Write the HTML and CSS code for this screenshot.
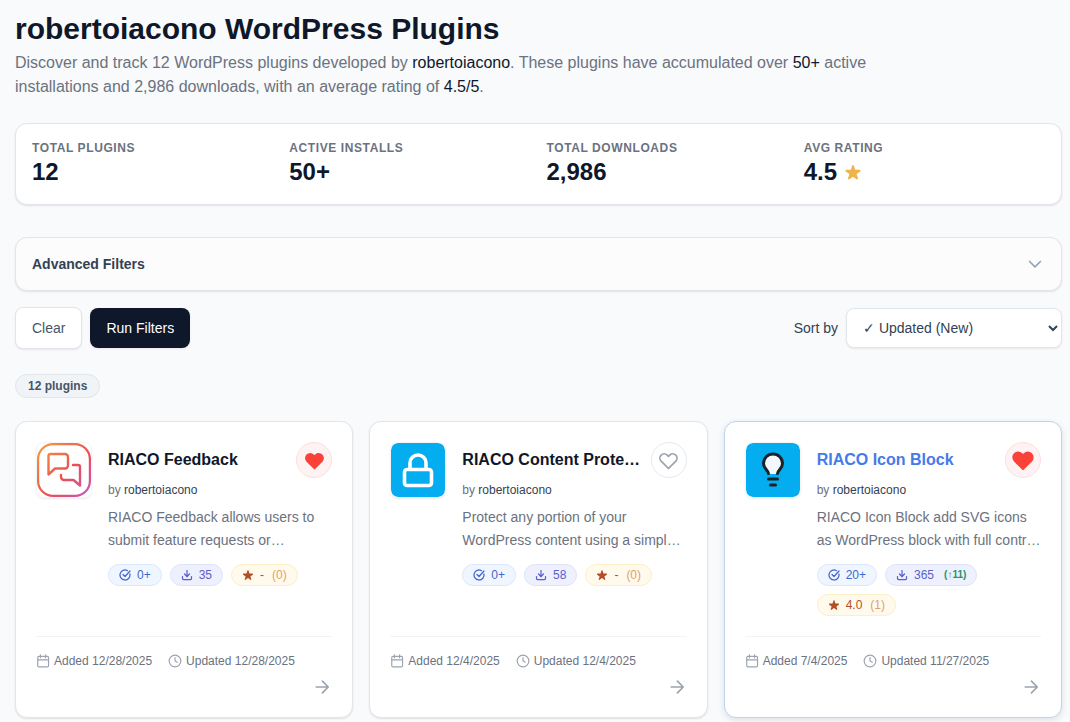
FILE: index.html
```html
<!DOCTYPE html>
<html lang="en">
<head>
    <meta charset="UTF-8">
    <meta name="viewport" content="width=device-width, initial-scale=1.0">
    <title>robertoiacono WordPress Plugins</title>
    <link rel="stylesheet" href="styles.css">
</head>
<body>
    <!-- Shared icons -->
    <svg class="sprite" width="0" height="0">
        <symbol id="check" viewBox="0 0 24 24"><path d="M21.8 10A10 10 0 1 1 17 3.34"/><path d="m8 11 4 4L22 4"/></symbol>
        <symbol id="download" viewBox="0 0 24 24"><path d="M21 15v4a2 2 0 0 1-2 2H5a2 2 0 0 1-2-2v-4"/><path d="m7 10 5 5 5-5"/><path d="M12 15V3"/></symbol>
        <symbol id="star" viewBox="0 0 20 20"><path d="M9.05 2.93c.3-.92 1.6-.92 1.9 0l1.52 4.67h4.91c.97 0 1.37 1.24.59 1.81l-3.98 2.89 1.52 4.67c.3.92-.76 1.69-1.54 1.12L10 15.2l-3.97 2.89c-.78.57-1.84-.2-1.54-1.12l1.52-4.67-3.98-2.89c-.78-.57-.38-1.81.59-1.81h4.91z"/></symbol>
        <symbol id="heart" viewBox="0 0 24 24"><path d="M4.32 6.32a4.5 4.5 0 0 0 0 6.36L12 20.36l7.68-7.68a4.5 4.5 0 0 0-6.36-6.36L12 7.64l-1.32-1.32a4.5 4.5 0 0 0-6.36 0z"/></symbol>
        <symbol id="calendar" viewBox="0 0 24 24"><path d="M7.500 1.500v5M16.500 1.500v5M3 10h18"/><rect x="3" y="4" width="18.500" height="18" rx="2"/></symbol>
        <symbol id="clock" viewBox="0 0 24 24"><circle cx="12" cy="12" r="10"/><path d="M12 6v6l4 2"/></symbol>
        <symbol id="arrow" viewBox="0 0 24 24"><path d="M5 12h14M12.500 5l7 7-7 7"/></symbol>
    </svg>

    <div class="page">
        <header class="header">
            <h1>robertoiacono WordPress Plugins</h1>
            <p>Discover and track 12 WordPress plugins developed by <span>robertoiacono</span>. These plugins have accumulated over <span>50+</span> active installations and 2,986 downloads, with an average rating of <span>4.5/5</span>.</p>
        </header>

        <section class="stats">
            <div><div class="stat-label">Total Plugins</div><div class="stat-value">12</div></div>
            <div><div class="stat-label">Active Installs</div><div class="stat-value">50+</div></div>
            <div><div class="stat-label">Total Downloads</div><div class="stat-value">2,986</div></div>
            <div><div class="stat-label">Avg Rating</div><div class="stat-value">4.5 <svg class="stat-star"><use href="#star"/></svg></div></div>
        </section>

        <section class="filters">
            <h2>Advanced Filters</h2>
            <svg class="line-icon chevron" viewBox="0 0 24 24"><path d="m5.500 9 6.500 6.500L18.500 9"/></svg>
        </section>

        <div class="toolbar">
            <button class="btn btn-clear">Clear</button>
            <button class="btn btn-run">Run Filters</button>
            <label for="sort">Sort by</label>
            <select id="sort" class="sort">
                <option>✓ Updated (New)</option>
            </select>
        </div>

        <span class="count">12 plugins</span>

        <main class="grid">
            <article class="card">
                <div class="card-top">
                    <div class="logo">
                        <svg viewBox="0 0 54 54" stroke="url(#feedback)" stroke-linecap="round" stroke-linejoin="round">
                            <defs>
                                <linearGradient id="feedback" gradientUnits="userSpaceOnUse" x1="5" y1="5" x2="52" y2="52">
                                    <stop offset="0" stop-color="#f6923c"/>
                                    <stop offset=".55" stop-color="#e94f55"/>
                                    <stop offset="1" stop-color="#c757b5"/>
                                </linearGradient>
                            </defs>
                            <rect x="1.100" y="1.100" width="51.800" height="51.800" rx="15" stroke-width="2.200"/>
                            <path d="M13.500 11H28a3 3 0 0 1 3 3v8.500a3 3 0 0 1-3 3H18l-6.500 6V13a2 2 0 0 1 2-2z" stroke-width="2.400"/>
                            <path d="M36 22h5a2 2 0 0 1 2 2v18.500L36.500 37H27a3 3 0 0 1-3-3v-2" stroke-width="2.400"/>
                        </svg>
                    </div>
                    <div class="info">
                        <div class="title-row">
                            <h3>RIACO Feedback</h3>
                            <button class="fav active"><svg><use href="#heart"/></svg></button>
                        </div>
                        <p class="author">by <span>robertoiacono</span></p>
                        <p class="desc">RIACO Feedback allows users to<br>submit feature requests or…</p>
                        <div class="pills">
                            <span class="pill pill-blue"><svg class="line-icon"><use href="#check"/></svg>0+</span>
                            <span class="pill pill-indigo"><svg class="line-icon"><use href="#download"/></svg>35</span>
                            <span class="pill pill-amber"><svg><use href="#star"/></svg>-<span class="votes">(0)</span></span>
                        </div>
                    </div>
                </div>
                <footer class="card-footer">
                    <div class="dates">
                        <span><svg class="line-icon"><use href="#calendar"/></svg>Added 12/28/2025</span>
                        <span><svg class="line-icon"><use href="#clock"/></svg>Updated 12/28/2025</span>
                    </div>
                    <svg class="line-icon arrow"><use href="#arrow"/></svg>
                </footer>
            </article>

            <article class="card">
                <div class="card-top">
                    <div class="logo logo-blue">
                        <svg viewBox="0 0 54 54" stroke="#fff" stroke-width="3.600" stroke-linejoin="round">
                            <rect x="13.500" y="26.500" width="27" height="16" rx="2.500"/>
                            <path d="M19 26v-6a8 8 0 0 1 16 0v6"/>
                        </svg>
                    </div>
                    <div class="info">
                        <div class="title-row">
                            <h3>RIACO Content Prote…</h3>
                            <button class="fav"><svg><use href="#heart"/></svg></button>
                        </div>
                        <p class="author">by <span>robertoiacono</span></p>
                        <p class="desc">Protect any portion of your<br>WordPress content using a simpl…</p>
                        <div class="pills">
                            <span class="pill pill-blue"><svg class="line-icon"><use href="#check"/></svg>0+</span>
                            <span class="pill pill-indigo"><svg class="line-icon"><use href="#download"/></svg>58</span>
                            <span class="pill pill-amber"><svg><use href="#star"/></svg>-<span class="votes">(0)</span></span>
                        </div>
                    </div>
                </div>
                <footer class="card-footer">
                    <div class="dates">
                        <span><svg class="line-icon"><use href="#calendar"/></svg>Added 12/4/2025</span>
                        <span><svg class="line-icon"><use href="#clock"/></svg>Updated 12/4/2025</span>
                    </div>
                    <svg class="line-icon arrow"><use href="#arrow"/></svg>
                </footer>
            </article>

            <article class="card highlighted">
                <div class="card-top">
                    <div class="logo logo-blue">
                        <svg viewBox="0 0 54 54" stroke="#1c2227" stroke-width="3" stroke-linecap="round" stroke-linejoin="round">
                            <path fill="#f2f8fd" d="M22.500 31c0-3-5-4.500-5-10.500a9.500 9.500 0 0 1 19 0c0 6-5 7.500-5 10.500z" stroke="none"/>
                            <path d="M22.500 30.500c0-3-5-4.500-5-10a9.500 9.500 0 0 1 19 0c0 5.500-5 7-5 10"/>
                            <path d="M22.500 36h9M24.500 42h5"/>
                        </svg>
                    </div>
                    <div class="info">
                        <div class="title-row">
                            <h3>RIACO Icon Block</h3>
                            <button class="fav active"><svg class="fav-large"><use href="#heart"/></svg></button>
                        </div>
                        <p class="author">by <span>robertoiacono</span></p>
                        <p class="desc">RIACO Icon Block add SVG icons<br>as WordPress block with full contr…</p>
                        <div class="pills">
                            <span class="pill pill-blue"><svg class="line-icon"><use href="#check"/></svg>20+</span>
                            <span class="pill pill-indigo"><svg class="line-icon"><use href="#download"/></svg>365<span class="growth">(↑11)</span></span>
                            <span class="pill pill-amber"><svg><use href="#star"/></svg>4.0<span class="votes">(1)</span></span>
                        </div>
                    </div>
                </div>
                <footer class="card-footer">
                    <div class="dates">
                        <span><svg class="line-icon"><use href="#calendar"/></svg>Added 7/4/2025</span>
                        <span><svg class="line-icon"><use href="#clock"/></svg>Updated 11/27/2025</span>
                    </div>
                    <svg class="line-icon arrow"><use href="#arrow"/></svg>
                </footer>
            </article>
        </main>
    </div>
</body>
</html>
```
FILE: styles.css
```css
* {
    box-sizing: border-box;
}

body {
    margin: 0;
    height: 722px;
    overflow: hidden;
    background: #f8fafc;
    color: #0f172a;
    font-family: "Liberation Sans", Arial, sans-serif;
    font-size: 14px;
    line-height: 20px;
}

h1, h2, h3, p {
    margin: 0;
}

button, select {
    font: inherit;
}

svg {
    display: block;
    flex-shrink: 0;
    fill: currentColor;
}

.sprite {
    position: absolute;
}

.line-icon {
    fill: none;
    stroke: currentColor;
    stroke-width: 2;
    stroke-linecap: round;
    stroke-linejoin: round;
}

.page {
    padding: 11px 8px 0 15px;
}

.header h1 {
    font-size: 30px;
    line-height: 36px;
}

.header p {
    max-width: 896px;
    margin-top: 4px;
    color: #6b7280;
    font-size: 16px;
    line-height: 24px;
}

.header p span {
    color: #0f172a;
}

.stats,
.filters {
    border: 1px solid #e2e5e9;
    border-radius: 12px;
    background: #fff;
    box-shadow: 0 1px 2px rgba(0, 0, 0, 0.1);
}

.stats {
    display: grid;
    grid-template-columns: repeat(4, 1fr);
    gap: 16px;
    margin-top: 24px;
    padding: 16px;
}

.stat-label {
    color: #6b7280;
    font-size: 12px;
    font-weight: bold;
    line-height: 16px;
    letter-spacing: 0.6px;
    text-transform: uppercase;
}

.stat-value {
    display: flex;
    align-items: center;
    gap: 7px;
    font-size: 24px;
    font-weight: bold;
    line-height: 32px;
}

.stat-star {
    width: 18px;
    height: 18px;
    color: #f0b24a;
}

.filters {
    display: flex;
    align-items: center;
    justify-content: space-between;
    height: 54px;
    margin-top: 32px;
    padding: 0 16px;
    background: #fcfcfd;
}

.filters h2 {
    color: #334155;
    font-size: 14px;
}

.chevron {
    width: 20px;
    height: 20px;
    color: #94a3b8;
}

.toolbar {
    display: flex;
    align-items: center;
    gap: 8px;
    margin-top: 16px;
    color: #334155;
}

.toolbar label {
    margin-left: auto;
}

.btn {
    padding: 10px 16px;
    border: 1px solid #e2e5e9;
    border-radius: 8px;
    background: #fff;
    color: #475569;
    box-shadow: 0 1px 2px rgba(0, 0, 0, 0.08);
}

.btn-run {
    border: 0;
    background: #0f172a;
    color: #fff;
}

.sort {
    width: 216px;
    height: 40px;
    padding: 0 0 0 12px;
    border: 1px solid #e2e5e9;
    border-radius: 8px;
    background: #fff;
    color: #334155;
    box-shadow: 0 1px 2px rgba(0, 0, 0, 0.08);
}

.count {
    display: block;
    width: fit-content;
    margin-top: 25px;
    padding: 3px 12px;
    border: 1px solid #e2e5e9;
    border-radius: 12px;
    background: #f1f4f6;
    color: #475569;
    font-size: 12px;
    font-weight: bold;
    line-height: 16px;
}

.grid {
    display: grid;
    grid-template-columns: repeat(3, minmax(0, 1fr));
    gap: 16px;
    margin-top: 23px;
}

.card {
    display: flex;
    flex-direction: column;
    height: 297px;
    padding: 20px;
    border: 1px solid #e2e5e9;
    border-radius: 12px;
    background: #fff;
    box-shadow: 0 1px 2px rgba(0, 0, 0, 0.1);
}

.card.highlighted {
    border-color: #c0d3e8;
    box-shadow: 0 2px 6px rgba(15, 40, 80, 0.12);
}

.highlighted h3 {
    color: #447bea;
}

.card-top {
    display: flex;
    gap: 16px;
}

.logo {
    flex-shrink: 0;
    width: 56px;
    height: 56px;
    border: 1px solid #f3f5f8;
    border-radius: 8px;
    overflow: hidden;
    box-shadow: 0 1px 2px rgba(0, 0, 0, 0.08);
}

.logo svg {
    width: 54px;
    height: 54px;
    fill: none;
}

.logo-blue svg {
    border-radius: 7px;
    background: #03adef;
}

.info {
    flex: 1;
    min-width: 0;
}

.title-row {
    display: flex;
    align-items: center;
    justify-content: space-between;
    gap: 8px;
}

.title-row h3 {
    font-size: 16px;
    line-height: 24px;
    white-space: nowrap;
}

.fav {
    display: flex;
    flex-shrink: 0;
    align-items: center;
    justify-content: center;
    width: 36px;
    height: 36px;
    padding: 0;
    border: 1px solid #e5e7eb;
    border-radius: 50%;
    background: #fff;
    color: #9ca3af;
}

.fav svg {
    width: 23px;
    height: 23px;
    fill: none;
    stroke: currentColor;
    stroke-width: 1.8;
    stroke-linejoin: round;
}

.fav.active {
    border-color: #fbe0e1;
    background: #fef2f2;
    color: #fa4238;
}

.fav.active svg {
    fill: currentColor;
}

.fav .fav-large {
    width: 26px;
    height: 26px;
}

.author {
    margin-top: 4px;
    color: #6b7280;
    font-size: 12px;
    line-height: 16px;
}

.author span {
    color: #334155;
}

.desc {
    margin-top: 8px;
    color: #6b7280;
    line-height: 22.75px;
    white-space: nowrap;
}

.pills {
    display: flex;
    flex-wrap: wrap;
    gap: 8px;
    margin-top: 12px;
}

.pill {
    display: flex;
    align-items: center;
    gap: 6px;
    padding: 2px 10px;
    border: 1px solid;
    border-radius: 11px;
    font-size: 12px;
    line-height: 16px;
}

.pill svg {
    width: 12px;
    height: 12px;
}

.pill .line-icon {
    stroke-width: 2.5;
}

.pill-blue {
    border-color: #dbe8fc;
    background: #eff6ff;
    color: #4366ce;
}

.pill-indigo {
    border-color: #dfe4fb;
    background: #eef0fe;
    color: #5a5fd0;
}

.pill-amber {
    border-color: #fdf0c6;
    background: #fffaeb;
    color: #b54e24;
}

.votes {
    margin-left: 2px;
    color: #e2a071;
}

.growth {
    margin-left: 4px;
    color: #219669;
    font-size: 10px;
    font-weight: bold;
}

.card-footer {
    margin-top: auto;
    padding-top: 16px;
    border-top: 1px solid #f1f3f5;
    color: #6b7280;
    font-size: 12px;
    line-height: 16px;
}

.dates {
    display: flex;
    gap: 16px;
}

.dates span {
    display: flex;
    align-items: center;
    gap: 4px;
}

.dates svg {
    width: 14px;
    height: 14px;
    color: #9ca3af;
}

.arrow {
    width: 20px;
    height: 20px;
    margin: 8px 0 0 auto;
    color: #9ca3af;
}
```
